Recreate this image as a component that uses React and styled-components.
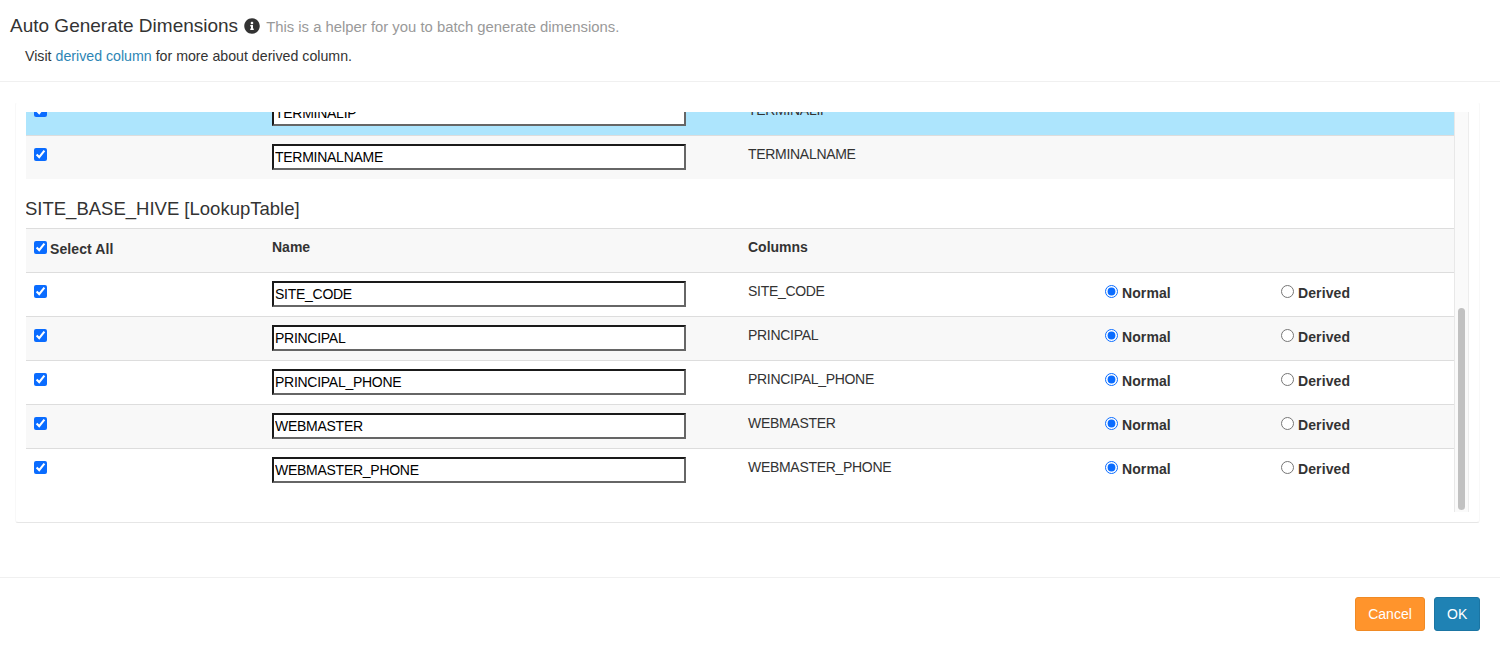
import React, { useLayoutEffect, useRef } from 'react'
import styled, { createGlobalStyle } from 'styled-components'
import { FaInfoCircle } from 'react-icons/fa'

const lookupColumns = ['SITE_CODE', 'PRINCIPAL', 'PRINCIPAL_PHONE', 'WEBMASTER', 'WEBMASTER_PHONE']

const DimensionRow = ({ name, tone, noDerive }) => (
  <Row $tone={tone}>
    <Cell><CheckBox type='checkbox' defaultChecked /></Cell>
    <Cell><NameInput type='text' defaultValue={name} /></Cell>
    <ColumnCell>{name}</ColumnCell>
    <Cell>
      {!noDerive && <RadioLabel><Radio type='radio' name={name} defaultChecked />Normal</RadioLabel>}
    </Cell>
    <Cell>
      {!noDerive && <RadioLabel><Radio type='radio' name={name} />Derived</RadioLabel>}
    </Cell>
  </Row>
)

const Columns = () => (
  <colgroup>
    <col style={{ width: 238 }} />
    <col style={{ width: 476 }} />
    <col style={{ width: 357 }} />
    <col style={{ width: 176 }} />
    <col />
  </colgroup>
)

const App = () => {
  const scroller = useRef(null)

  // the dialog is opened with the list scrolled to its end
  useLayoutEffect(() => {
    scroller.current.scrollTop = scroller.current.scrollHeight
  }, [])

  return (
    <>
      <GlobalStyle />
      <Modal>
        <Header>
          <TitleLine>
            <Title>Auto Generate Dimensions</Title>
            <InfoIcon />
            <Hint>This is a helper for you to batch generate dimensions.</Hint>
          </TitleLine>
          <Note>Visit <NoteLink href='#'>derived column</NoteLink> for more about derived column.</Note>
        </Header>

        <Body>
          <Panel>
            <Scroller ref={scroller}>
              <HiddenRows />
              <Table>
                <Columns />
                <tbody>
                  <DimensionRow name='TERMINALIP' tone='active' noDerive />
                  <DimensionRow name='TERMINALNAME' tone='striped' noDerive />
                </tbody>
              </Table>

              <TableTitle>SITE_BASE_HIVE [LookupTable]</TableTitle>

              <Table>
                <Columns />
                <tbody>
                  <Row $tone='striped'>
                    <HeadCell>
                      <SelectAll><CheckBox type='checkbox' defaultChecked />Select All</SelectAll>
                    </HeadCell>
                    <HeadCell>Name</HeadCell>
                    <HeadCell>Columns</HeadCell>
                    <HeadCell />
                    <HeadCell />
                  </Row>
                  {lookupColumns.map((name, i) => (
                    <DimensionRow key={name} name={name} tone={i % 2 ? 'striped' : 'plain'} />
                  ))}
                </tbody>
              </Table>
              <ListEnd />
            </Scroller>
            <ScrollTrack>
              <ScrollThumb />
            </ScrollTrack>
          </Panel>
        </Body>

        <Footer>
          <CancelButton>Cancel</CancelButton>
          <OkButton>OK</OkButton>
        </Footer>
      </Modal>
    </>
  )
}

const GlobalStyle = createGlobalStyle`
    body {
        margin: 0;
        background: #FFFFFF;
        color: #333333;
        font-family: 'Liberation Sans', Arial, sans-serif;
        font-size: 14px;
        line-height: 20px;
    }
`

const Modal = styled.div`
    width: 1500px;
    height: 650px;
    overflow: hidden;
`

const Header = styled.div`
    height: 81px;
    box-sizing: content-box;
    border-bottom: 1px solid #F0F0F0;
`

const TitleLine = styled.div`
    display: flex;
    align-items: center;
    padding: 16px 0 0 10px;
    height: 20px;
`

const Title = styled.span`
    font-size: 19px;
    color: #333333;
`

const InfoIcon = styled(FaInfoCircle)`
    width: 16px;
    height: 16px;
    margin-left: 6px;
    color: #333333;
`

const Hint = styled.span`
    margin: 2px 0 0 6px;
    font-size: 14.85px;
    color: #999999;
`

const Note = styled.div`
    margin: 10px 0 0 25px;
    font-size: 14.2px;
`

const NoteLink = styled.a`
    color: #2C85B5;
    text-decoration: none;
`

const Body = styled.div`
    height: 475px;
    padding: 20px 20px 0 15px;
`

const Panel = styled.div`
    box-sizing: border-box;
    display: flex;
    height: 421px;
    padding: 9px 10px 10px;
    border: 1px solid #F8F8F8;
    border-top-color: #FFFFFF;
    border-bottom: 1px solid #E6E6E6;
    border-radius: 3px;
`

const Scroller = styled.div`
    flex: 1;
    height: 400px;
    overflow: hidden;
`

const ScrollTrack = styled.div`
    box-sizing: border-box;
    display: flex;
    align-items: flex-end;
    width: 15px;
    height: 400px;
    padding: 2px 3px;
    background: #FAFAFA;
    border-left: 1px solid #E8E8E8;
    border-right: 1px solid #EDEDED;
`

const ScrollThumb = styled.div`
    width: 8px;
    height: 202px;
    border-radius: 4px;
    background: #C1C1C1;
`

// rows of the fact table above the fold, out of view at this scroll position
const HiddenRows = styled.div`
    height: 354px;
`

const Table = styled.table`
    width: 1429px;
    table-layout: fixed;
    border-collapse: collapse;
    border-spacing: 0;
`

const toneColors = {
  active: '#ADE5FD',
  striped: '#F8F8F8',
  plain: '#FFFFFF',
}

const Row = styled.tr`
    height: 44px;
    background: ${(p) => toneColors[p.$tone]};
`

const Cell = styled.td`
    box-sizing: border-box;
    height: 44px;
    padding: 8px;
    border-top: 1px solid #DDDDDD;
    vertical-align: top;
    font-size: 14px;
    line-height: 20px;
    color: #333333;
`

const HeadCell = styled(Cell)`
    font-weight: 700;
`

const ColumnCell = styled(Cell)`
    letter-spacing: -0.3px;
`

const CheckBox = styled.input`
    width: 13px;
    height: 13px;
    margin: 4px 3px 0 0;
    accent-color: #0A6CFF;
`

const Radio = styled.input`
    width: 13px;
    height: 13px;
    margin: 4px 4px 0 0;
    accent-color: #0A6CFF;
`

const SelectAll = styled.label`
    font-weight: 700;
    letter-spacing: 0.1px;
`

const RadioLabel = styled.label`
    font-weight: 700;
    letter-spacing: 0.1px;
`

const NameInput = styled.input`
    box-sizing: border-box;
    display: block;
    width: 414px;
    height: 26px;
    padding: 1px;
    border: 2px solid;
    border-color: #1A1A1A #666666 #666666 #1A1A1A;
    background: #FFFFFF;
    color: #000000;
    font-family: 'Liberation Sans', Arial, sans-serif;
    font-size: 14px;
    letter-spacing: -0.27px;
`

const TableTitle = styled.div`
    position: relative;
    height: 49px;
    box-sizing: border-box;
    margin: -1px 0 0 -1px;
    padding-top: 20px;
    background: #FFFFFF;
    font-size: 18.5px;
    line-height: 20px;
    color: #333333;
`

const ListEnd = styled.div`
    height: 20px;
`

const Footer = styled.div`
    display: flex;
    justify-content: flex-end;
    gap: 9px;
    height: 72px;
    box-sizing: border-box;
    padding: 19px 20px 0 0;
    border-top: 1px solid #F0F0F0;
`

const Button = styled.button`
    height: 34px;
    padding: 6px 12px;
    border: 1px solid;
    border-radius: 3px;
    color: #FFFFFF;
    font-family: 'Liberation Sans', Arial, sans-serif;
    font-size: 14px;
    line-height: 20px;
`

const CancelButton = styled(Button)`
    width: 70px;
    background: #FF942C;
    border-color: #F08A24;
`

const OkButton = styled(Button)`
    width: 46px;
    background: #1F82B4;
    border-color: #1B75A3;
`

export default App
